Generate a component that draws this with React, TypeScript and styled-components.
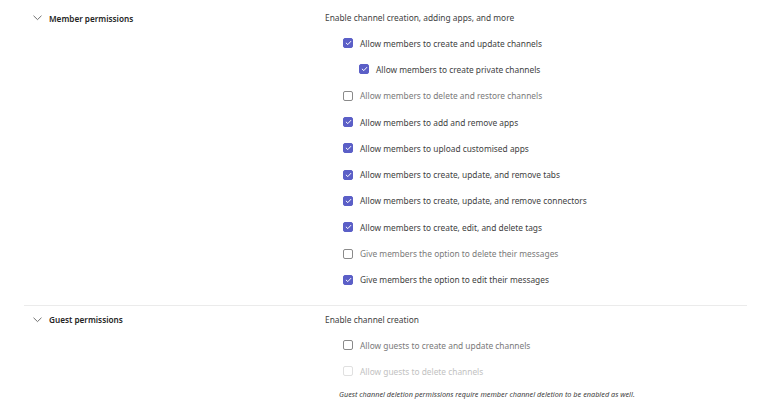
import React from "react"
import styled, { createGlobalStyle } from "styled-components"

type State = "on" | "off" | "disabled"

interface IOption {
    label: string
    state: State
    nested?: boolean
}

const memberOptions: IOption[] = [
    { label: "Allow members to create and update channels", state: "on" },
    { label: "Allow members to create private channels", state: "on", nested: true },
    { label: "Allow members to delete and restore channels", state: "off" },
    { label: "Allow members to add and remove apps", state: "on" },
    { label: "Allow members to upload customised apps", state: "on" },
    { label: "Allow members to create, update, and remove tabs", state: "on" },
    { label: "Allow members to create, update, and remove connectors", state: "on" },
    { label: "Allow members to create, edit, and delete tags", state: "on" },
    { label: "Give members the option to delete their messages", state: "off" },
    { label: "Give members the option to edit their messages", state: "on" },
]

const guestOptions: IOption[] = [
    { label: "Allow guests to create and update channels", state: "off" },
    { label: "Allow guests to delete channels", state: "disabled" },
]

const Chevron = () => (
    <svg width="9" height="6" viewBox="0 0 9 6" fill="none">
        <path d="M0.8 1 L4.5 4.6 L8.2 1" stroke="#616161" strokeWidth="0.9" strokeLinecap="round" strokeLinejoin="round" />
    </svg>
)

const Option: React.FC<{ option: IOption }> = ({ option }) => (
    <Row nested={option.nested}>
        <Box state={option.state}>
            {option.state == "on" && (
                <svg width="7" height="6" viewBox="0 0 7 6" fill="none">
                    <path d="M1.2 3.1 L2.8 4.6 L5.8 1.4" stroke="#fff" strokeWidth="1" strokeLinecap="round" strokeLinejoin="round" />
                </svg>
            )}
        </Box>
        <Label state={option.state}>{option.label}</Label>
    </Row>
)

const App = (): JSX.Element => {
    return (
        <>
            <GlobalStyle />
            <Page>
                <Section first>
                    <Heading>
                        <Chevron />
                        <Title>Member permissions</Title>
                    </Heading>
                    <Content>
                        <Description>Enable channel creation, adding apps, and more</Description>
                        <List>
                            {memberOptions.map(o => <Option key={o.label} option={o} />)}
                        </List>
                    </Content>
                </Section>
                <Divider />
                <Section>
                    <Heading>
                        <Chevron />
                        <Title>Guest permissions</Title>
                    </Heading>
                    <Content>
                        <Description>Enable channel creation</Description>
                        <List>
                            {guestOptions.map(o => <Option key={o.label} option={o} />)}
                        </List>
                        <Note>Guest channel deletion permissions require member channel deletion to be enabled as well.</Note>
                    </Content>
                </Section>
            </Page>
        </>
    )
}

export default App

const GlobalStyle = createGlobalStyle`
    body {
        margin: 0;
        background: #ffffff;
        font-family: "Noto Sans", "Open Sans", Arial, sans-serif;
        -webkit-font-smoothing: antialiased;
    }
`

const Page = styled.div`
    width: 768px;
    height: 404px;
    overflow: hidden;
    background: #fff;
`

const Section = styled.div<{ first?: boolean }>`
    display: grid;
    grid-template-columns: 292px 1fr;
    padding: ${p => (p.first ? "8px" : "4px")} 0 0 33px;
`

const Heading = styled.div`
    display: flex;
    align-items: center;
    gap: 7px;
    height: 20px;
    align-self: start;
`

const Title = styled.span`
    font-size: 8.2px;
    font-weight: 600;
    color: #242424;
`

const Content = styled.div`
    display: flex;
    flex-direction: column;
`

const Description = styled.div`
    height: 20px;
    line-height: 20px;
    font-size: 8.35px;
    color: #424242;
`

const List = styled.div`
    display: flex;
    flex-direction: column;
    padding-top: 2px;
`

const Row = styled.div<{ nested?: boolean }>`
    display: flex;
    align-items: center;
    gap: 7px;
    height: 26.3px;
    padding-left: ${p => (p.nested ? "34px" : "18px")};
`

const Box = styled.span<{ state: State }>`
    box-sizing: border-box;
    width: 10px;
    height: 10px;
    border-radius: 2px;
    display: flex;
    align-items: center;
    justify-content: center;
    background: ${p => (p.state == "on" ? "#5b5fc7" : "#fff")};
    border: 1px solid ${p => (p.state == "on" ? "#5b5fc7" : p.state == "off" ? "#8a8a8a" : "#e0e0e0")};
`

const Label = styled.span<{ state: State }>`
    font-size: 8.35px;
    color: ${p => (p.state == "on" ? "#424242" : p.state == "off" ? "#7a7a7a" : "#c2c2c2")};
`

const Note = styled.div`
    height: 18px;
    line-height: 18px;
    padding-left: 14px;
    font-size: 7.3px;
    font-style: italic;
    color: #424242;
`

const Divider = styled.div`
    height: 1px;
    margin: 12px 21px 0 24px;
    background: #ebebeb;
`
